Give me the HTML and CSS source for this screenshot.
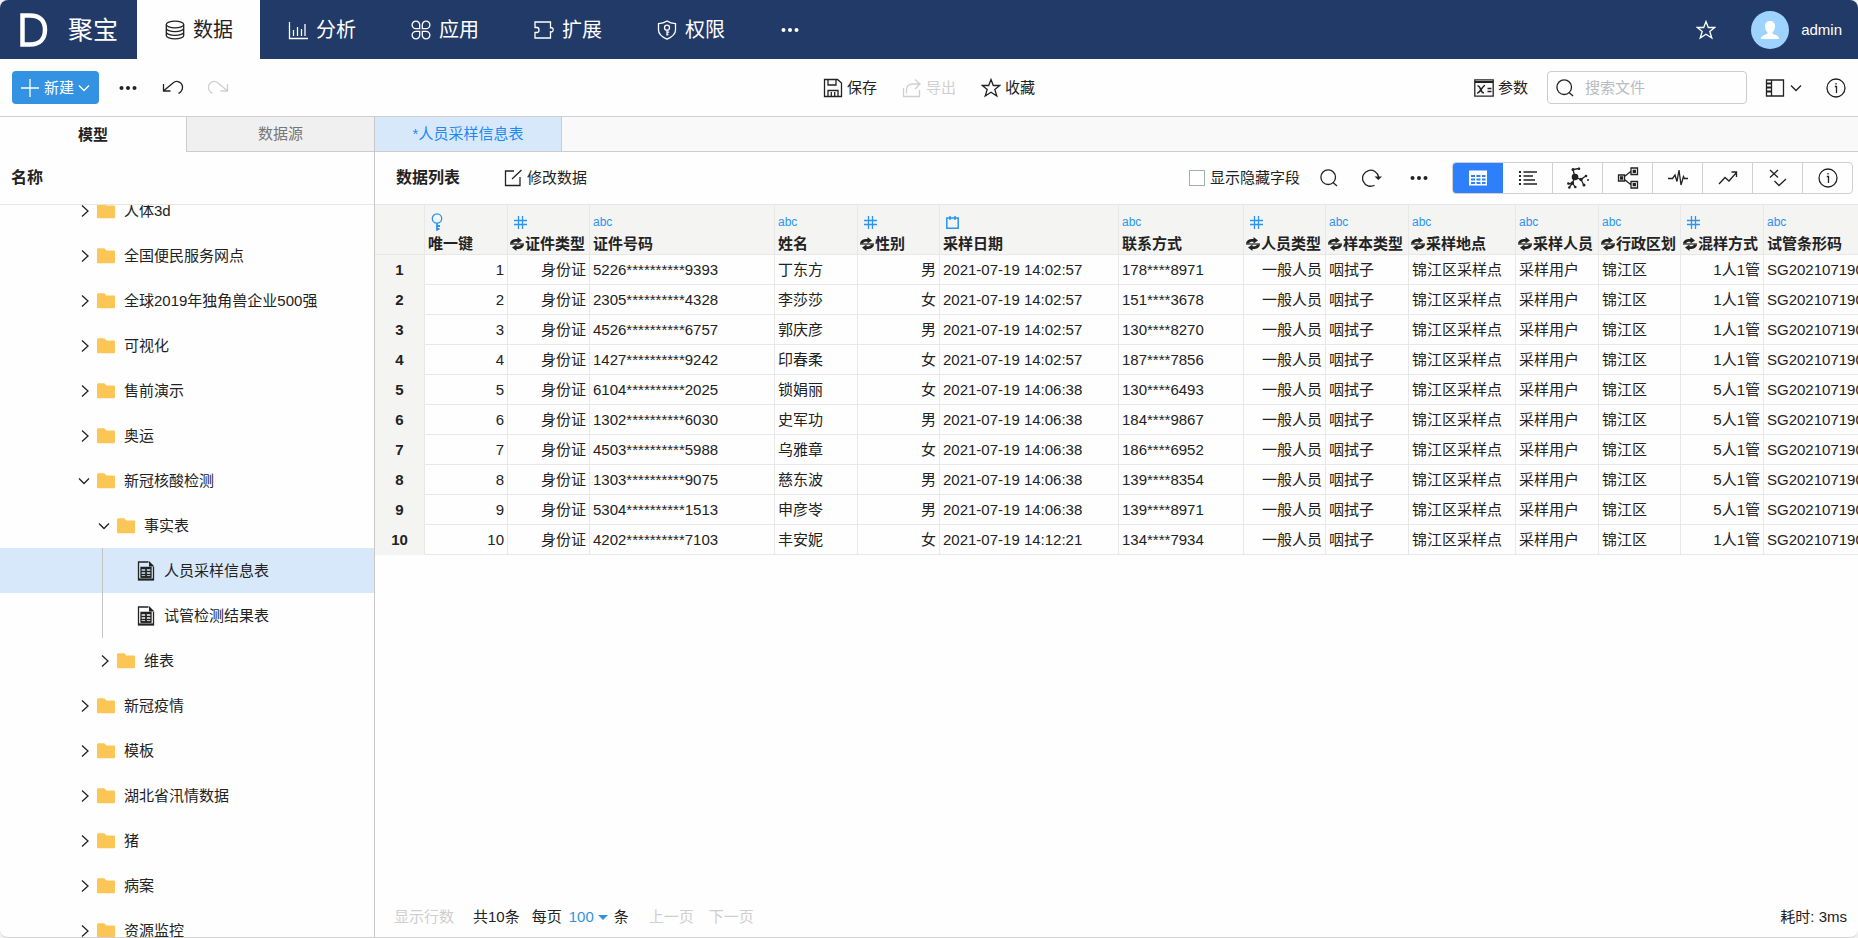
FILE: index.html
```html
<!DOCTYPE html>
<html lang="zh-CN">
<head>
<meta charset="utf-8">
<title>聚宝 - 数据</title>
<link rel="stylesheet" href="styles.css">
</head>
<body>
<svg class="sprite" aria-hidden="true">
  <symbol id="i-dots" viewBox="0 0 18 6"><g fill="currentColor"><circle cx="2.500" cy="3" r="2"/><circle cx="9" cy="3" r="2"/><circle cx="15.500" cy="3" r="2"/></g></symbol>
  <symbol id="i-star" viewBox="0 0 20 20"><path d="M10 1.500l2.300 6h6.500l-5 4 2 6.500-5.800-3.800L4.200 18l2-6.500-5-4h6.500z"/></symbol>
  <symbol id="i-down" viewBox="0 0 12 12"><path d="M1 3.500l5 5 5-5"/></symbol>
  <symbol id="i-right" viewBox="0 0 12 12"><path d="M4 .5l6 5.500-6 5.500"/></symbol>
  <symbol id="i-search" viewBox="0 0 18 18"><circle cx="8.200" cy="8.200" r="7.300"/><path d="M13 13.500l4 3.500"/></symbol>
  <symbol id="i-info" viewBox="0 0 20 20"><circle cx="10" cy="10" r="9"/><path d="M8.800 8.500h1.700v6.500M10 5v1.500"/></symbol>
  <symbol id="i-folder" viewBox="0 0 18 16"><path d="M0 1.500A1.200 1.200 0 0 1 1.200.3h6L9.500 2.500h7.300A1.200 1.200 0 0 1 18 3.700v10.600a1 1 0 0 1-1 1H1a1 1 0 0 1-1-1z" fill="#fcc656" stroke="none"/></symbol>
  <symbol id="i-sheet" viewBox="0 0 18 20"><path d="M11.500 1H1.500v17.500h15V6"/><path d="M1 18.500h16" stroke-width="2"/><path d="M12 0v5.500h5.500z" fill="currentColor" stroke="none"/><path d="M4 6.500h10v9.500H4z"/><path d="M4 7.500h10M4 10.500h10M4 13.500h10M9 7v9M4 16h10" stroke-width="1.700"/></symbol>
  <symbol id="i-hash" viewBox="0 0 13 13"><path d="M4.500 0v13M8.500 0v13M0 4.500h13M0 8.500h13"/></symbol>
  <symbol id="i-swap" viewBox="0 0 14 14"><path d="M0 6.500C.5 3 3.500 1.800 7.500 2V0L12 3.500 7.500 6.500V4.800C5 4.500 3.500 5 3 6.500zM14 7.500c-.5 3.500-3.500 4.700-7.500 4.500v2L2 10.500l4.500-3v1.700c2.500.3 4-.2 4.500-1.700z" fill="currentColor" stroke="none"/><path d="M0 7h14" stroke-width="1.200"/></symbol>
</svg>

<div class="app">
  <header class="topbar">
    <a class="brand" href="#"><svg class="brand-mark" viewBox="0 0 28 34" aria-label="D"><path d="M2.500 2.500h7.500c10 0 15 5.500 15 14.200S20 31.500 10 31.500H2.500z" stroke-width="4.500"/></svg><span>聚宝</span></a>
    <nav class="nav">
      <a class="nav-item active" href="#"><svg class="ic20" viewBox="0 0 20 20"><ellipse cx="10" cy="4.500" rx="8.700" ry="3.300"/><path d="M1.300 4.500v11c0 1.900 3.900 3.400 8.700 3.400s8.700-1.500 8.700-3.400v-11M1.300 8.200c0 1.900 3.900 3.400 8.700 3.400s8.700-1.500 8.700-3.400M1.300 11.900c0 1.900 3.900 3.400 8.700 3.400s8.700-1.500 8.700-3.400"/></svg>数据</a>
      <a class="nav-item" href="#"><svg class="ic20" viewBox="0 0 20 20"><path d="M1.500 2v16.500H20M5.500 10v6M9.500 7v9M13.500 9v7M17 4v12"/></svg>分析</a>
      <a class="nav-item" href="#"><svg class="ic20" viewBox="0 0 20 20"><path d="M8.700 8.700H5A3.800 3.800 0 1 1 8.700 5zM11.300 8.700H15A3.800 3.800 0 1 0 11.300 5zM8.700 11.300H5A3.800 3.800 0 1 0 8.700 15zM11.300 11.300H15A3.800 3.800 0 1 1 11.300 15z"/></svg>应用</a>
      <a class="nav-item" href="#"><svg class="ic20" viewBox="0 0 20 20"><path d="M1 7.500V2h15.500v6c1-.5 2.700-.3 2.700 1.800s-1.700 2.500-2.700 2V18H1v-5.500h2c1.200 0 2-1 2-2.500s-.8-2.500-2-2.500z"/></svg>扩展</a>
      <a class="nav-item" href="#"><svg class="ic20" viewBox="0 0 20 20"><path d="M10 1c2.500 1.700 5 2.500 8.500 2.700V10c0 4.500-3.500 7-8.500 9.200C5 17 1.500 14.500 1.500 10V3.700C5 3.500 7.500 2.700 10 1z"/><circle cx="10" cy="7.700" r="2.500"/><path d="M10 10.200v5.300M10 12.200h2.200M10 14.500h1.500"/></svg>权限</a>
      <button class="nav-more" type="button" aria-label="更多"><svg class="dots"><use href="#i-dots"/></svg></button>
    </nav>
    <div class="user">
      <button type="button" aria-label="收藏夹"><svg class="ic20"><use href="#i-star"/></svg></button>
      <svg class="avatar" viewBox="0 0 38 38"><circle cx="19" cy="19" r="19" fill="#9fd3ff" stroke="none"/><path d="M19 10c3 0 5 2 5 5.200 0 2.500-1 4.800-2.500 6v1.600c2.500 1.200 6.500 1.700 6.500 5.200H10c0-3.500 4-4 6.500-5.200v-1.600c-1.500-1.200-2.500-3.500-2.500-6C14 12 16 10 19 10z" fill="#fff" stroke="none"/></svg>
      <span>admin</span>
    </div>
  </header>

  <div class="toolbar">
    <div class="tools tools-left">
      <button class="new" type="button"><svg class="ic20" viewBox="0 0 20 20"><path d="M10 1v18M1 10h18"/></svg>新建<svg class="ic12"><use href="#i-down"/></svg></button>
      <button type="button" aria-label="更多"><svg class="dots"><use href="#i-dots"/></svg></button>
      <button class="undo" type="button" aria-label="撤销"><svg class="ic22" viewBox="0 0 22 22"><path d="M1.500 7v7h7M2 13.500L11 6a5.700 5.700 0 0 1 9.500 4.500c0 3-1.500 4.500-4 6"/></svg></button>
      <button class="redo" type="button" aria-label="重做" disabled><svg class="ic22" viewBox="0 0 22 22"><path d="M20.500 7v7h-7M20 13.500L11 6a5.700 5.700 0 0 0-9.500 4.500c0 3 1.500 4.500 4 6"/></svg></button>
    </div>
    <div class="tools tools-mid">
      <button type="button"><svg class="ic20" viewBox="0 0 20 20"><path d="M1.500 1.500h13l4 3.500v13.500h-17zM5 1.500v5.500h8V1.500M5 18.500v-6h10v6M8.300 14v4.500M11.700 14v4.500"/></svg>保存</button>
      <button type="button" disabled><svg class="ic20" viewBox="0 0 20 20"><path d="M1.500 10v8.500h16V12M4.500 15.500V12c0-4 3-6 7-6h6M13 1.500L18 6l-5 5"/></svg>导出</button>
      <button type="button"><svg class="ic20"><use href="#i-star"/></svg>收藏</button>
    </div>
    <div class="tools tools-right">
      <button class="param" type="button"><svg class="ic20" viewBox="0 0 20 20"><path d="M.8 1.800h18.400v16.400H.8z"/><path d="M1 4h18" stroke-width="2"/><path d="M3.500 8c3.500-1 3 8 6.500 6.500M11 7.500c-2.500 0-5 8-8 7.500M13.500 10.500h4M13.500 13.500h4" stroke-width="1.500"/></svg>参数</button>
      <label class="search"><svg class="ic18"><use href="#i-search"/></svg><input type="text" placeholder="搜索文件" aria-label="搜索文件"></label>
      <button class="layout" type="button" aria-label="布局"><svg class="ic20" viewBox="0 0 20 20"><path d="M1.500 2h17v16h-17zM6.500 2v16"/><path d="M1.500 5.500h5M1.500 9.500h5M1.500 13.500h5" stroke-width="2"/></svg><svg class="ic12"><use href="#i-down"/></svg></button>
      <button type="button" aria-label="信息"><svg class="ic20"><use href="#i-info"/></svg></button>
    </div>
  </div>

  <div class="body">
    <aside class="side">
      <div class="side-tabs"><button class="on" type="button">模型</button><button type="button">数据源</button></div>
      <h2 class="side-title">名称</h2>
      <div class="tree-view">
        <ul class="tree">
          <li><button type="button"><svg class="ic12"><use href="#i-right"/></svg><svg class="folder"><use href="#i-folder"/></svg>人体3d</button></li>
          <li><button type="button"><svg class="ic12"><use href="#i-right"/></svg><svg class="folder"><use href="#i-folder"/></svg>全国便民服务网点</button></li>
          <li><button type="button"><svg class="ic12"><use href="#i-right"/></svg><svg class="folder"><use href="#i-folder"/></svg>全球2019年独角兽企业500强</button></li>
          <li><button type="button"><svg class="ic12"><use href="#i-right"/></svg><svg class="folder"><use href="#i-folder"/></svg>可视化</button></li>
          <li><button type="button"><svg class="ic12"><use href="#i-right"/></svg><svg class="folder"><use href="#i-folder"/></svg>售前演示</button></li>
          <li><button type="button"><svg class="ic12"><use href="#i-right"/></svg><svg class="folder"><use href="#i-folder"/></svg>奥运</button></li>
          <li><button type="button"><svg class="ic12"><use href="#i-down"/></svg><svg class="folder"><use href="#i-folder"/></svg>新冠核酸检测</button>
            <ul class="level2">
              <li><button type="button"><svg class="ic12"><use href="#i-down"/></svg><svg class="folder"><use href="#i-folder"/></svg>事实表</button>
                <ul class="level3">
                  <li><button class="selected" type="button"><span class="guide"></span><svg class="sheet"><use href="#i-sheet"/></svg>人员采样信息表</button></li>
                  <li><button type="button"><span class="guide"></span><svg class="sheet"><use href="#i-sheet"/></svg>试管检测结果表</button></li>
                </ul>
              </li>
              <li><button type="button"><svg class="ic12"><use href="#i-right"/></svg><svg class="folder"><use href="#i-folder"/></svg>维表</button></li>
            </ul>
          </li>
          <li><button type="button"><svg class="ic12"><use href="#i-right"/></svg><svg class="folder"><use href="#i-folder"/></svg>新冠疫情</button></li>
          <li><button type="button"><svg class="ic12"><use href="#i-right"/></svg><svg class="folder"><use href="#i-folder"/></svg>模板</button></li>
          <li><button type="button"><svg class="ic12"><use href="#i-right"/></svg><svg class="folder"><use href="#i-folder"/></svg>湖北省汛情数据</button></li>
          <li><button type="button"><svg class="ic12"><use href="#i-right"/></svg><svg class="folder"><use href="#i-folder"/></svg>猪</button></li>
          <li><button type="button"><svg class="ic12"><use href="#i-right"/></svg><svg class="folder"><use href="#i-folder"/></svg>病案</button></li>
          <li><button type="button"><svg class="ic12"><use href="#i-right"/></svg><svg class="folder"><use href="#i-folder"/></svg>资源监控</button></li>
        </ul>
      </div>
    </aside>

    <main class="main">
      <div class="file-tabs"><button type="button">*人员采样信息表</button></div>
      <div class="list-head">
        <h2>数据列表</h2>
        <button class="edit" type="button"><svg class="ic18" viewBox="0 0 18 18"><path d="M10 2H1.500v14.500H16V8M8 10l9.500-9"/></svg>修改数据</button>
        <div class="list-tools">
          <label class="check"><input type="checkbox">显示隐藏字段</label>
          <button type="button" aria-label="搜索"><svg class="ic18"><use href="#i-search"/></svg></button>
          <button type="button" aria-label="刷新"><svg class="ic20" viewBox="0 0 20 20"><path d="M12.500 17.200a8 8 0 1 1 4-8.200"/><path d="M12.500 8.500h7.500L16.300 12z" fill="currentColor" stroke="none"/></svg></button>
          <button type="button" aria-label="更多"><svg class="dots"><use href="#i-dots"/></svg></button>
          <div class="views">
            <button class="on" type="button" aria-label="表格"><svg class="ic20" viewBox="0 0 20 20"><path d="M1 2.500h18v15H1z" fill="#fff" stroke="none"/><path d="M3 7h4v2H3zM8.500 7h4v2h-4zM14 7h3.500v2H14zM3 10.500h4v2H3zM8.500 10.500h4v2h-4zM14 10.500h3.500v2H14zM3 14h4v2H3zM8.500 14h4v2h-4zM14 14h3.500v2H14z" fill="#2d80fa" stroke="none"/></svg></button>
            <button type="button" aria-label="列表"><svg class="ic20" viewBox="0 0 20 20"><path d="M5.500 4H19M5.500 8H15M5.500 12H17M5.500 16H19" stroke-width="1.600"/><path d="M1 4h2M1 8h2M1 12h2M1 16h2" stroke-width="2"/></svg></button>
            <button type="button" aria-label="关系"><svg class="ic22" viewBox="0 0 22 22"><path d="M8 10L6 2.500 12 1.500M8 10l6 2.500 4-3M14 12.500l2.500 5M8 10l-2.500 6-4 1M5.500 16l2.500 4M5.500 16l-3 4"/><g fill="currentColor" stroke="none"><circle cx="8" cy="10" r="3.300"/><circle cx="6" cy="2.500" r="1.500"/><circle cx="12" cy="1.800" r="1.300"/><circle cx="14" cy="12.500" r="1.700"/><circle cx="19" cy="9" r="1.300"/><circle cx="21" cy="13" r="1"/><circle cx="17" cy="18" r="1.500"/><circle cx="5.500" cy="16" r="1.700"/><circle cx="1.300" cy="16.500" r="1.200"/><circle cx="2.300" cy="20.500" r="1.200"/><circle cx="8.300" cy="20" r="1.300"/></g></svg></button>
            <button type="button" aria-label="血缘"><svg class="ic22" viewBox="0 0 22 22"><path d="M1.500 8h6v6h-6zM14 1h6.500v6.500H14zM14 14.500h6.500V21H14zM7.500 9.500L14 4.300M7.500 12.500L14 17.700"/><path d="M3.500 10h2v2h-2zM16.300 3.300h2v2h-2zM16.300 16.700h2v2h-2z" fill="currentColor"/></svg></button>
            <button type="button" aria-label="波动"><svg class="ic20" viewBox="0 0 20 20"><path d="M0 10.500h4.500L7 7l2 6.500L11 2l2 15 2.500-8.500 1 2H20"/></svg></button>
            <button type="button" aria-label="趋势"><svg class="ic20" viewBox="0 0 20 20"><path d="M1 16l6-6.500 4 3.500 7.500-8.500M13.500 4h5v5"/></svg></button>
            <button type="button" aria-label="校验"><svg class="ic20" viewBox="0 0 20 20"><path d="M2 2l8 7.500M10 2L2 9.500M6.500 13l4.500 4.500L18 11"/></svg></button>
            <button type="button" aria-label="信息"><svg class="ic20"><use href="#i-info"/></svg></button>
          </div>
        </div>
      </div>
      <div class="grid">
        <table>
          <colgroup><col class="w50"><col class="w83"><col class="w82"><col class="w185"><col class="w83"><col class="w82"><col class="w179"><col class="w125"><col class="w82"><col class="w83"><col class="w107"><col class="w83"><col class="w82"><col class="w83"><col class="w185"></colgroup>
          <thead><tr>
            <th></th>
            <th><div class="type icon"><svg class="key" viewBox="0 0 12 18"><circle cx="6" cy="5.500" r="4.700"/><path d="M6 10.200v7.500M6 13h3M6 16h2.500" stroke-width="1.800"/></svg></div><div class="name">唯一键</div></th>
            <th><div class="type icon"><svg class="ic13"><use href="#i-hash"/></svg></div><div class="name swappable"><svg class="swap"><use href="#i-swap"/></svg>证件类型</div></th>
            <th><div class="type">abc</div><div class="name">证件号码</div></th>
            <th><div class="type">abc</div><div class="name">姓名</div></th>
            <th><div class="type icon"><svg class="ic13"><use href="#i-hash"/></svg></div><div class="name swappable"><svg class="swap"><use href="#i-swap"/></svg>性别</div></th>
            <th><div class="type icon"><svg class="ic13" viewBox="0 0 13 13"><path d="M.8 2h11.400v10.200H.8z" stroke-width="1.500"/><path d="M4 0v4M9 0v4" stroke-width="1.500"/></svg></div><div class="name">采样日期</div></th>
            <th><div class="type">abc</div><div class="name">联系方式</div></th>
            <th><div class="type icon"><svg class="ic13"><use href="#i-hash"/></svg></div><div class="name swappable"><svg class="swap"><use href="#i-swap"/></svg>人员类型</div></th>
            <th><div class="type">abc</div><div class="name swappable"><svg class="swap"><use href="#i-swap"/></svg>样本类型</div></th>
            <th><div class="type">abc</div><div class="name swappable"><svg class="swap"><use href="#i-swap"/></svg>采样地点</div></th>
            <th><div class="type">abc</div><div class="name swappable"><svg class="swap"><use href="#i-swap"/></svg>采样人员</div></th>
            <th><div class="type">abc</div><div class="name swappable"><svg class="swap"><use href="#i-swap"/></svg>行政区划</div></th>
            <th><div class="type icon"><svg class="ic13"><use href="#i-hash"/></svg></div><div class="name swappable"><svg class="swap"><use href="#i-swap"/></svg>混样方式</div></th>
            <th><div class="type">abc</div><div class="name">试管条形码</div></th>
          </tr></thead>
          <tbody>
            <tr><th>1</th><td class="r">1</td><td class="r">身份证</td><td>5226**********9393</td><td>丁东方</td><td class="r">男</td><td>2021-07-19 14:02:57</td><td>178****8971</td><td class="r">一般人员</td><td>咽拭子</td><td>锦江区采样点</td><td>采样用户</td><td>锦江区</td><td class="r">1人1管</td><td>SG202107190</td></tr>
            <tr><th>2</th><td class="r">2</td><td class="r">身份证</td><td>2305**********4328</td><td>李莎莎</td><td class="r">女</td><td>2021-07-19 14:02:57</td><td>151****3678</td><td class="r">一般人员</td><td>咽拭子</td><td>锦江区采样点</td><td>采样用户</td><td>锦江区</td><td class="r">1人1管</td><td>SG202107190</td></tr>
            <tr><th>3</th><td class="r">3</td><td class="r">身份证</td><td>4526**********6757</td><td>郭庆彦</td><td class="r">男</td><td>2021-07-19 14:02:57</td><td>130****8270</td><td class="r">一般人员</td><td>咽拭子</td><td>锦江区采样点</td><td>采样用户</td><td>锦江区</td><td class="r">1人1管</td><td>SG202107190</td></tr>
            <tr><th>4</th><td class="r">4</td><td class="r">身份证</td><td>1427**********9242</td><td>印春柔</td><td class="r">女</td><td>2021-07-19 14:02:57</td><td>187****7856</td><td class="r">一般人员</td><td>咽拭子</td><td>锦江区采样点</td><td>采样用户</td><td>锦江区</td><td class="r">1人1管</td><td>SG202107190</td></tr>
            <tr><th>5</th><td class="r">5</td><td class="r">身份证</td><td>6104**********2025</td><td>锁娟丽</td><td class="r">女</td><td>2021-07-19 14:06:38</td><td>130****6493</td><td class="r">一般人员</td><td>咽拭子</td><td>锦江区采样点</td><td>采样用户</td><td>锦江区</td><td class="r">5人1管</td><td>SG202107190</td></tr>
            <tr><th>6</th><td class="r">6</td><td class="r">身份证</td><td>1302**********6030</td><td>史军功</td><td class="r">男</td><td>2021-07-19 14:06:38</td><td>184****9867</td><td class="r">一般人员</td><td>咽拭子</td><td>锦江区采样点</td><td>采样用户</td><td>锦江区</td><td class="r">5人1管</td><td>SG202107190</td></tr>
            <tr><th>7</th><td class="r">7</td><td class="r">身份证</td><td>4503**********5988</td><td>乌雅章</td><td class="r">女</td><td>2021-07-19 14:06:38</td><td>186****6952</td><td class="r">一般人员</td><td>咽拭子</td><td>锦江区采样点</td><td>采样用户</td><td>锦江区</td><td class="r">5人1管</td><td>SG202107190</td></tr>
            <tr><th>8</th><td class="r">8</td><td class="r">身份证</td><td>1303**********9075</td><td>慈东波</td><td class="r">男</td><td>2021-07-19 14:06:38</td><td>139****8354</td><td class="r">一般人员</td><td>咽拭子</td><td>锦江区采样点</td><td>采样用户</td><td>锦江区</td><td class="r">5人1管</td><td>SG202107190</td></tr>
            <tr><th>9</th><td class="r">9</td><td class="r">身份证</td><td>5304**********1513</td><td>申彦岺</td><td class="r">男</td><td>2021-07-19 14:06:38</td><td>139****8971</td><td class="r">一般人员</td><td>咽拭子</td><td>锦江区采样点</td><td>采样用户</td><td>锦江区</td><td class="r">5人1管</td><td>SG202107190</td></tr>
            <tr><th>10</th><td class="r">10</td><td class="r">身份证</td><td>4202**********7103</td><td>丰安妮</td><td class="r">女</td><td>2021-07-19 14:12:21</td><td>134****7934</td><td class="r">一般人员</td><td>咽拭子</td><td>锦江区采样点</td><td>采样用户</td><td>锦江区</td><td class="r">1人1管</td><td>SG202107190</td></tr>
          </tbody>
        </table>
      </div>
      <footer class="pager">
        <button class="rows" type="button" disabled>显示行数</button>
        <span class="total">共10条</span>
        <label class="size">每页<span class="size-box"><select><option>100</option></select><i></i></span>条</label>
        <button class="prev" type="button" disabled>上一页</button>
        <button type="button" disabled>下一页</button>
        <span class="cost">耗时: 3ms</span>
      </footer>
    </main>
  </div>
</div>
</body>
</html>
```

FILE: styles.css
```css
* { box-sizing: border-box; }
html, body { height: 100%; }
body {
  margin: 0;
  background: #f0f0f0;
  color: #222;
  font: 15px/20px "Liberation Sans", "Noto Sans CJK SC", sans-serif;
}
h2, ul { margin: 0; padding: 0; font-size: 16px; }
ul { list-style: none; font-size: 15px; }
a { color: inherit; text-decoration: none; }
button, input, select { font: inherit; color: inherit; margin: 0; }
button {
  display: flex;
  align-items: center;
  padding: 0;
  border: 0;
  background: none;
  white-space: nowrap;
}
button:disabled { color: #cfcfcf; }
svg { flex: none; fill: none; stroke: currentColor; stroke-width: 1.3; }
.sprite { display: none; }
.dots { width: 18px; height: 6px; stroke: none; }
.ic12 { width: 12px; height: 12px; }
.ic13 { width: 13px; height: 13px; }
.ic18 { width: 18px; height: 18px; }
.ic20 { width: 20px; height: 20px; }
.ic22 { width: 22px; height: 22px; }

.app {
  display: flex;
  flex-direction: column;
  height: 100vh;
  background: #fefefe;
  border-bottom: 1px solid #d0d0d0;
  border-radius: 8px;
  overflow: hidden;
}

/* Top bar */
.topbar { display: flex; flex: none; height: 59px; background: #223a68; color: #fff; }
.brand { display: flex; align-items: center; gap: 20px; width: 137px; padding-left: 20px; font-size: 25px; line-height: 36px; }
.brand-mark { width: 28px; height: 34px; }
.nav { display: flex; flex: 1; }
.nav-item { display: flex; align-items: center; gap: 8px; width: 123px; padding-left: 28px; font-size: 20px; line-height: 28px; }
.nav-item.active { background: #fefefe; color: #222; }
.nav-more { padding-left: 29px; }
.user { display: flex; align-items: center; padding-right: 16px; }
.avatar { width: 38px; height: 38px; margin: 0 12px 0 35px; }

/* Toolbar */
.toolbar {
  display: grid;
  grid-template-columns: 1fr auto 1fr;
  align-items: center;
  flex: none;
  height: 58px;
  padding: 0 12px;
  border-bottom: 1px solid #d0d0d0;
}
.tools { display: flex; align-items: center; }
.tools-left { gap: 20px; }
.new { height: 33px; padding: 0 9px 0 8px; gap: 4px; border-radius: 4px; background: #3492e2; color: #fff; }
.undo { margin-left: 5px; }
.redo { margin-left: 3px; }
.tools-mid { gap: 25px; }
.tools-mid button, .param { gap: 4px; }
.tools-right { justify-content: flex-end; }
.search {
  display: flex;
  align-items: center;
  width: 200px;
  height: 33px;
  margin: 0 18px 0 19px;
  padding-left: 8px;
  border: 1px solid #ccc;
  border-radius: 4px;
}
.search input { flex: 1; min-width: 0; margin-left: 11px; padding: 0; border: 0; outline: 0; background: none; }
.search input::placeholder { color: #b8bbbf; }
.layout { gap: 5px; margin-right: 24px; }

/* Sidebar */
.body { display: flex; flex: 1; min-height: 0; }
.side { display: flex; flex-direction: column; flex: none; width: 375px; border-right: 1px solid #c8c8c8; }
.side-tabs { display: grid; grid-template-columns: 186fr 188fr; flex: none; height: 35px; }
.side-tabs button { justify-content: center; background: #f0f0f0; color: #777; border: solid #ccc; border-width: 0 0 1px 1px; }
.side-tabs .on { background: none; color: #222; font-weight: bold; border: 0; }
.side-title { flex: none; height: 53px; padding-left: 11px; line-height: 52px; border-bottom: 1px solid #e6e6e6; }
.tree-view { flex: 1; min-height: 0; overflow: hidden; }
.tree { margin-top: -17px; }
.tree button { width: 100%; height: 45px; padding-left: 78px; }
.tree .level2 button { padding-left: 98px; }
.tree .level3 button { padding-left: 102px; }
.tree .selected { background: #d8e8fb; }
.folder { width: 18px; height: 16px; margin: 0 9px 0 7px; }
.sheet { width: 18px; height: 20px; margin: 0 9px 0 34px; }
.guide { width: 1px; height: 45px; background: #c4c4c4; }

/* Main */
.main { display: flex; flex-direction: column; flex: 1; min-width: 0; }
.file-tabs { display: flex; flex: none; height: 35px; background: #f9f9f9; border-bottom: 1px solid #ccc; }
.file-tabs button { justify-content: center; width: 187px; background: #d8e8fb; color: #1e88f5; border-right: 1px solid #ccc; }
.list-head { display: flex; align-items: center; flex: none; height: 53px; padding: 0 5px 0 21px; border-bottom: 1px solid #e6e6e6; }
.edit { gap: 5px; margin-left: 44px; }
.list-tools { display: flex; align-items: center; margin-left: auto; }
.check { display: flex; align-items: center; gap: 5px; margin-right: 20px; }
.check input { appearance: none; width: 16px; height: 16px; border: 1px solid #9fb0b4; background: #fff; }
.list-tools > button { margin-right: 24px; }
.list-tools > button + button + button { margin: 0 24px 0 4px; }
.views { display: flex; height: 32px; border: 1px solid #d0d0d0; border-radius: 4px; overflow: hidden; }
.views button { justify-content: center; width: 50px; border-right: 1px solid #d0d0d0; }
.views button:last-child { width: 49px; border: 0; }
.views .on { background: #2d80fa; border-color: #2d80fa; }

/* Data grid */
.grid { flex: 1; min-height: 0; overflow: hidden; }
table { width: 1574px; table-layout: fixed; border-collapse: separate; border-spacing: 0; }
.w50 { width: 50px; }
.w82 { width: 82px; }
.w83 { width: 83px; }
.w107 { width: 107px; }
.w125 { width: 125px; }
.w179 { width: 179px; }
.w185 { width: 185px; }
th, td { height: 30px; padding: 0 3px; border: solid #e8e8e8; border-width: 0 1px 1px 0; text-align: left; white-space: nowrap; }
thead th { height: 50px; padding: 6px 0 0 3px; background: #f4f4f3; }
tbody th { background: #f4f4f3; border-color: #f4f4f3 #e8e8e8 #f4f4f3 #f4f4f3; text-align: center; }
.r { text-align: right; }
.type { display: flex; align-items: center; height: 22px; color: #2a94f0; font-size: 12px; font-weight: normal; }
.type.icon { padding-left: 3px; }
.key { width: 12px; height: 18px; }
.name { display: flex; align-items: center; height: 21px; }
.swappable { margin-left: -1px; gap: 1px; }
.swap { width: 14px; height: 14px; }

/* Footer */
.pager { display: flex; align-items: center; flex: none; height: 40px; padding: 0 11px 0 19px; }
.total { margin: 0 12px 0 19px; }
.size { display: flex; align-items: center; }
.size-box { position: relative; margin: 0 6px 0 7px; color: #3492e2; }
.size select { display: block; appearance: none; width: 39px; padding: 0; border: 0; background: none; }
.size i { position: absolute; top: 8px; right: 0; border: solid transparent; border-width: 5px 5px 0; border-top-color: #3492e2; pointer-events: none; }
.prev { margin: 0 15px 0 20px; }
.cost { margin-left: auto; }
```
